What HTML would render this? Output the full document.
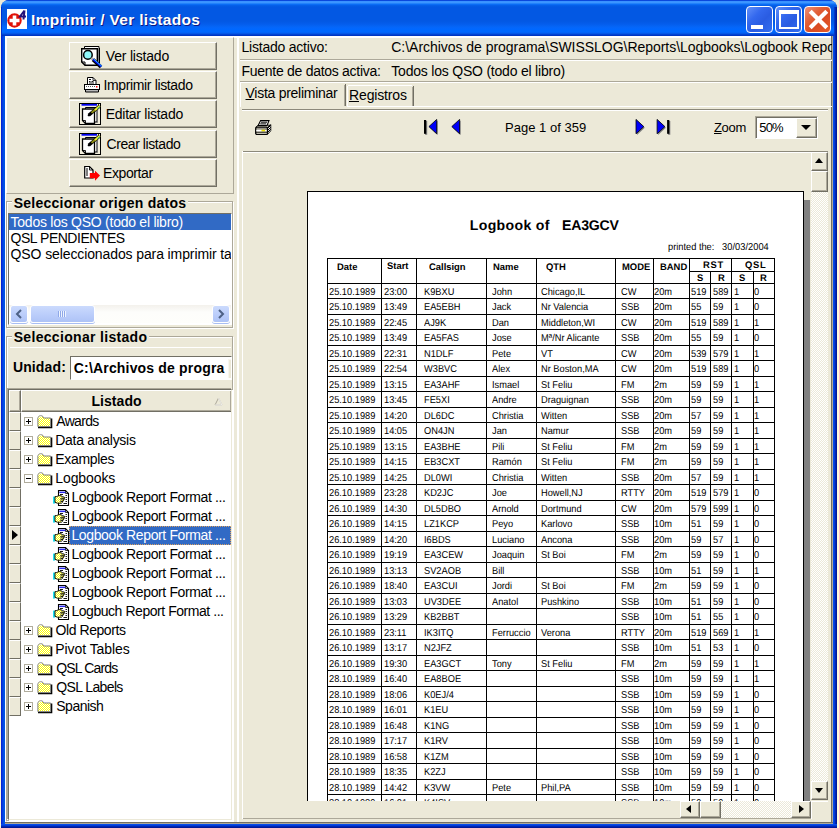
<!DOCTYPE html>
<html><head><meta charset="utf-8"><title>Imprimir / Ver listados</title>
<style>
*{box-sizing:border-box;margin:0;padding:0}
html,body{width:839px;height:828px;overflow:hidden;background:#ECE9D8}
body{font-family:"Liberation Sans",sans-serif;font-size:14px;color:#000;position:relative}
.lt{position:absolute;top:0;white-space:nowrap}
#b1{left:35.80px;letter-spacing:-0.199px}
#b2{left:33.50px;letter-spacing:-0.361px}
#b3{left:35.80px;letter-spacing:-0.273px}
#b4{left:36.50px;letter-spacing:-0.423px}
#b5{left:33.00px;letter-spacing:-0.393px}
#g1{left:6.70px;letter-spacing:0.256px}
#g2{left:6.70px;letter-spacing:0.319px}
#un{left:7.90px;letter-spacing:0.143px}
#hl{left:82.50px;letter-spacing:0.045px}
#r1{left:236.50px;letter-spacing:-0.222px}
#r2{left:236.50px;letter-spacing:-0.279px}
#r4{left:386.30px;letter-spacing:-0.210px}
#r3{left:386.30px;letter-spacing:-0.037px}
#t1{left:240.50px;letter-spacing:-0.271px}
#t2{left:344.00px;letter-spacing:-0.141px}
#zm{left:709.00px;letter-spacing:-0.334px}
#zp{left:3.30px;letter-spacing:-0.830px}
#pg{left:500.00px;letter-spacing:0.023px}
#l1{left:1.60px;letter-spacing:-0.253px}
#l2{left:1.60px;letter-spacing:-0.487px}
#l3{left:1.60px;letter-spacing:-0.110px}
#ed{left:2.80px;letter-spacing:0.173px}
#tr0{left:45.30px;letter-spacing:-0.686px}
#tr1{left:44.30px;letter-spacing:-0.287px}
#tr2{left:44.30px;letter-spacing:-0.338px}
#tr3{left:44.30px;letter-spacing:-0.102px}
#tr4{left:60.40px;letter-spacing:-0.368px}
#tr5{left:60.40px;letter-spacing:-0.368px}
#tr6{left:60.40px;letter-spacing:-0.368px}
#tr7{left:60.40px;letter-spacing:-0.368px}
#tr8{left:60.40px;letter-spacing:-0.368px}
#tr9{left:60.40px;letter-spacing:-0.368px}
#tr10{left:60.40px;letter-spacing:-0.451px}
#tr11{left:44.60px;letter-spacing:-0.440px}
#tr12{left:44.30px;letter-spacing:-0.062px}
#tr13{left:45.30px;letter-spacing:-0.856px}
#tr14{left:45.30px;letter-spacing:-0.618px}
#tr15{left:45.30px;letter-spacing:-0.518px}
i{display:block;position:absolute;font-style:normal}
.abs{position:absolute}
/* window frame */
#edgeL{left:0;top:0;width:1px;height:828px;background:#FFF9DC}
#edgeR{left:837px;top:0;width:2px;height:828px;background:#FFF9DC}
#win{position:absolute;left:1px;top:0;width:836px;height:828px;background:#0046E0;border-radius:8px 8px 0 0;overflow:hidden}
#title{position:absolute;left:0;top:0;width:836px;height:36px;
 background:linear-gradient(to bottom,#0A48DC 0,#0A48DC 1px,#3890FF 1px,#3C96FF 2.500px,#2383FA 3.500px,#0A6CF5 4.500px,#0560E8 5.500px,#0358E3 7px,#0358E3 21px,#045DEB 24px,#0566F8 27px,#0068FF 29px,#0068FF 32px,#0560F0 33px,#0450DE 34px,#0038C8 35px,#0034BE 36px)}
#bL{left:0;top:36px;width:4px;height:792px;background:linear-gradient(to right,#0019CF 0,#0831D9 1px,#0446E6 2px,#0055E5 3px,#0055E5 4px)}
#bR{left:832px;top:36px;width:4px;height:792px;background:linear-gradient(to right,#0A50EA 0,#0046E8 1px,#0030C8 2px,#001EA0 3px,#00138C 4px)}
#bB{left:0;top:824px;width:836px;height:4px;background:linear-gradient(to bottom,#0A50EA 0,#0046E8 1px,#0030C8 2px,#001EA0 3px,#00138C 4px)}
#ttext{position:absolute;left:30px;top:11px;font-weight:bold;font-size:15.5px;line-height:18px;color:#fff;white-space:nowrap;letter-spacing:.32px;text-shadow:1px 1px 0 #0A1883}
#client{position:absolute;left:4px;top:36px;width:828px;height:788px;background:#ECE9D8}
.raise{border:1px solid;border-color:#fff #ACA899 #ACA899 #fff}
.sunk{border:1px solid;border-color:#ACA899 #fff #fff #ACA899}
/* caption buttons */
.cb{position:absolute;top:6px;width:27px;height:27px;border:1px solid #fff;border-radius:4px;
 background:linear-gradient(135deg,#6290F8 0,#3368EE 35%,#2A5CE2 60%,#336EF0 100%)}
.cb.x{background:linear-gradient(135deg,#EC9078 0,#E26038 35%,#DA4A22 60%,#E45C2C 100%)}
/* left buttons */
.btn{position:absolute;left:65px;width:148px;height:28px;background:#ECE9D8;border:1px solid;border-color:#fff #716F64 #716F64 #fff;box-shadow:inset -1px -1px 0 #ACA899;white-space:nowrap}
.btn span{position:absolute;top:5px}
.btn svg{position:absolute}
.bold{font-weight:bold}
.lb{position:absolute;white-space:nowrap}
/* report */
#page i{background:#000}
.t{position:absolute;font-size:10px;line-height:12px;white-space:nowrap;color:#000;text-rendering:geometricPrecision;transform:scaleX(.926);transform-origin:0 50%}
span.t{font-weight:normal}
b.t{font-weight:bold}
.t.h{font-weight:bold;font-size:9.5px;transform:scaleX(.99)}
/* tree */
.ind{left:0;width:12px;height:19px;background:#ECE9D8;border:1px solid;border-color:#fff #716F64 #716F64 #fff}
.pm{width:9px;height:9px;border:1px solid #B0AC9C;background:#fff}
.pm .h{left:1px;top:3px;width:5px;height:1px;background:#000}
.pm .v{left:3px;top:1px;width:1px;height:5px;background:#000}
.fo{position:absolute;display:block}
.fo svg{display:block}
.tl{position:absolute;height:19px;line-height:18px;font-size:14px;white-space:nowrap;padding-left:2px}
.tl.sel{background:#316AC5;color:#fff;outline:1px dotted #d9a060;outline-offset:-1px;width:162px;overflow:hidden}
.xsb{box-shadow:0 1px 0 #A8BEF2}
.chk{background-color:#ECE9D8;background-image:linear-gradient(45deg,#fff 25%,transparent 25%,transparent 75%,#fff 75%),linear-gradient(45deg,#fff 25%,transparent 25%,transparent 75%,#fff 75%);background-size:2px 2px;background-position:0 0,1px 1px}
.cur{left:3px;width:0;height:0;border-left:6px solid #000;border-top:5px solid transparent;border-bottom:5px solid transparent}
</style></head>
<body>
<svg width="0" height="0" style="position:absolute"><defs><pattern id="dy" width="2" height="2" patternUnits="userSpaceOnUse"><rect width="2" height="2" fill="#FFFF00"/><rect width="1" height="1" fill="#fff"/><rect x="1" y="1" width="1" height="1" fill="#fff"/></pattern><pattern id="dw" width="2" height="2" patternUnits="userSpaceOnUse"><rect width="2" height="2" fill="#ECE9D8"/><rect width="1" height="1" fill="#fff"/><rect x="1" y="1" width="1" height="1" fill="#fff"/></pattern></defs></svg>
<i id="edgeL"></i><i id="edgeR"></i>
<i style="left:0;top:0;width:8px;height:8px;background:#ECE9D8"></i>
<i style="left:831px;top:0;width:8px;height:8px;background:#ECE9D8"></i>
<div id="win">
 <div id="title">
  <!-- app icon -->
  <svg class="abs" style="left:6px;top:9px" width="20" height="20" viewBox="0 0 20 20">
   <rect width="20" height="20" fill="#fff"/>
   <circle cx="7.5" cy="11.5" r="7.2" fill="#E01208"/>
   <path d="M5.7 6.5h3.6v3.2h3.2v3.6H9.3v3.2H5.7v-3.2H2.5V9.7h3.2z" fill="#fff"/>
   <path d="M17.5 1.5 L13 7.5 H19 M17.5 1.5 L16.5 10.5" stroke="#25107A" stroke-width="2" fill="none"/>
  </svg>
  <i style="left:833px;top:7px;width:3px;height:29px;background:linear-gradient(to right,#0040D8,#0028B0,#001590)"></i><i style="left:0;top:7px;width:1px;height:29px;background:#0030D0"></i>
  <div id="ttext">Imprimir / Ver listados</div>
  <div class="cb" style="left:745px"><i style="left:4px;top:18px;width:11.500px;height:4px;background:#fff"></i></div>
  <div class="cb" style="left:774px"><i style="left:3px;top:3px;width:19.500px;height:19px;border:2.200px solid #fff;border-top-width:4px"></i></div>
  <div class="cb x" style="left:803px"><svg style="position:absolute;left:.5px;top:0" width="25" height="25" viewBox="0 0 25 25"><path d="M4.200 4.200 L20.800 20.800 M20.800 4.200 L4.200 20.800" stroke="#fff" stroke-width="4.200"/></svg></div>
 </div>
 <i id="bL"></i><i id="bR"></i><i id="bB"></i>
 <div id="client">
  <!-- coordinates inside client = page coords minus (5,36) -->
  <i style="left:0;top:0;width:828px;height:2px;background:#fff"></i>
  <i style="left:0;top:0;width:1px;height:788px;background:#fff"></i>
  <i style="left:826px;top:0;width:1px;height:788px;background:#716F64"></i>
  <i style="left:827px;top:0;width:1px;height:788px;background:#ACA899"></i>
  <i style="left:0;top:786px;width:828px;height:1px;background:#716F64"></i>
  <i style="left:0;top:787px;width:828px;height:1px;background:#ACA899"></i>

  <!-- LEFT top button panel -->
  <div class="abs raise" style="left:1px;top:1px;width:228px;height:157px"></div>
  <div class="btn" style="left:64px;top:6px">
   <svg style="left:8px;top:2px" width="26" height="24" viewBox="0 0 26 24"><path d="M6.500 1.500H21V17.500H6.500Z" fill="#fff" stroke="#000"/><path d="M21.500 3V18.500H8" stroke="#000" fill="none"/><path d="M3.700 3.700H19.300V20.300H7L3.700 17Z" fill="#fff" stroke="#000" stroke-width="1.400"/><path d="M3.700 17H7V20.300" fill="none" stroke="#000"/><circle cx="9.900" cy="9.900" r="4.300" fill="#8FF6F8" stroke="#000" stroke-width="1.500"/><path d="M13.200 13 L15 14.600" stroke="#B0B0B0" stroke-width="2.600"/><path d="M15 14.600 L23 22" stroke="#000" stroke-width="3.600"/><path d="M15.200 14.200 L23.400 21.600" stroke="#0010FF" stroke-width="2"/><path d="M15.800 14 L23.800 21.200" stroke="#30D0FF" stroke-width=".9"/></svg>
   <span id="b1">Ver listado</span></div>
  <div class="btn" style="left:64px;top:35px">
   <svg style="left:13px;top:4px" width="18" height="18" viewBox="0 0 18 18"><path d="M4.500 8V1.500H10L13 4.500V8" fill="#fff" stroke="#000"/><path d="M10 1.500V4.500H13" fill="none" stroke="#000" stroke-width=".8"/><path d="M6 3.500h2M6 5.500h1.500M8.500 5.500h2M6 7h5" stroke="#000" stroke-width=".9"/><rect x="1.500" y="8.500" width="15" height="5" fill="#fff" stroke="#000"/><path d="M3 10.500h10" stroke="#555" stroke-dasharray="1 1"/><rect x="13" y="10" width="1.500" height="1.500" fill="#f00"/><path d="M2.500 13.500h13v2.500h-13z" fill="#B8B8B8" stroke="#000"/></svg>
   <span id="b2">Imprimir listado</span></div>
  <div class="btn" style="left:64px;top:64px">
   <svg style="left:9px;top:2px" width="24" height="24" viewBox="0 0 24 24"><rect x=".5" y=".5" width="21" height="21" fill="#F4F0DE" stroke="#000"/><rect x="2.500" y="1" width="15.500" height="1.700" fill="#0000F0"/><rect x="19" y="1.200" width="1" height="1" fill="#000"/><path d="M6.500 4.500H18V19H6.500Z" fill="#fff" stroke="#000"/><path d="M18.500 6V19.500H8" stroke="#777" fill="none"/><path d="M3.500 6H15.500V20.500H6.500L3.500 17.500Z" fill="#fff" stroke="#000" stroke-width="1.300"/><path d="M3.500 17.500H6.500V20.500" fill="none" stroke="#000" stroke-width=".9"/><path d="M9.700 12.200 L20.700 3" stroke="#000" stroke-width="3.400"/><path d="M12.500 9.800 L16.500 6.500" stroke="#8A8A10" stroke-width="2"/><path d="M16 7 L20.800 3" stroke="#F6F020" stroke-width="2.200"/><path d="M18.300 5.800 L21 3.600" stroke="#20B0A0" stroke-width="1"/><path d="M9 12.800 L11.500 10.700" stroke="#000" stroke-width="1.600"/></svg>
   <span id="b3">Editar listado</span></div>
  <div class="btn" style="left:64px;top:94px">
   <svg style="left:9px;top:2px" width="24" height="24" viewBox="0 0 24 24"><rect x=".5" y=".5" width="21" height="21" fill="#F4F0DE" stroke="#000"/><rect x="2.500" y="1" width="15.500" height="1.700" fill="#0000F0"/><rect x="19" y="1.200" width="1" height="1" fill="#000"/><path d="M6.500 4.500H18V19H6.500Z" fill="#fff" stroke="#000"/><path d="M18.500 6V19.500H8" stroke="#777" fill="none"/><path d="M3.500 6H15.500V20.500H6.500L3.500 17.500Z" fill="#fff" stroke="#000" stroke-width="1.300"/><path d="M3.500 17.500H6.500V20.500" fill="none" stroke="#000" stroke-width=".9"/><path d="M9.700 12.200 L20.700 3" stroke="#000" stroke-width="3.400"/><path d="M12.500 9.800 L16.500 6.500" stroke="#8A8A10" stroke-width="2"/><path d="M16 7 L20.800 3" stroke="#F6F020" stroke-width="2.200"/><path d="M18.300 5.800 L21 3.600" stroke="#20B0A0" stroke-width="1"/><path d="M9 12.800 L11.500 10.700" stroke="#000" stroke-width="1.600"/></svg>
   <span id="b4">Crear listado</span></div>
  <div class="btn" style="left:64px;top:123px">
   <svg style="left:14px;top:5px" width="18" height="18" viewBox="0 0 18 18"><path d="M.7 1.500H5.500L9 5V13H.7Z" fill="#fff" stroke="#000" stroke-width="1.200"/><path d="M5.500 1.500V5H9" fill="none" stroke="#000" stroke-width=".9"/><path d="M2 4h2M2 6h2M2 8h2M2 10h2" stroke="#000" stroke-width="1"/><path d="M5.800 8H11V5.700L16 10.500L11 15.700V13.200H5.800Z" fill="#FF0000"/></svg>
   <span id="b5">Exportar</span></div>

  <!-- Group 1 -->
  <div class="abs" style="left:1px;top:165px;width:227px;height:127px;border:1px solid #ACA899;box-shadow:inset 1px 1px 0 #fff, 1px 1px 0 #fff"></div>
  <div class="lb bold" id="g1" style="top:159px;background:#ECE9D8;padding:0 2px">Seleccionar origen datos</div>
  <div class="abs" style="left:3px;top:177px;width:224px;height:112px;background:#fff;border:1px solid;border-color:#716F64 #fff #fff #716F64;overflow:hidden">
   <div style="position:absolute;left:0;top:0;width:222px;height:16px;background:#316AC5;color:#fff;line-height:16px;white-space:nowrap"><span id="l1" class="lt">Todos los QSO (todo el libro)</span></div>
   <div style="position:absolute;left:0;top:16px;width:222px;height:16px;line-height:16px;white-space:nowrap"><span id="l2" class="lt">QSL PENDIENTES</span></div>
   <div style="position:absolute;left:0;top:32px;width:222px;height:16px;line-height:16px;white-space:nowrap;overflow:hidden"><span id="l3" class="lt">QSO seleccionados para imprimir tarjetas</span></div>
   <!-- XP horizontal scrollbar -->
   <div style="position:absolute;left:0;top:91px;width:222px;height:18px;background:linear-gradient(to bottom,#F3F1EC 0,#FDFDFB 40%,#FEFEFB 100%)">
    <i class="xsb" style="left:1px;top:0;width:18px;height:18px;border:1px solid #fff;border-radius:3px;background:linear-gradient(to bottom,#CBDAFD,#B9CCFA 60%,#AEC3F6)"></i>
    <i class="xsb" style="left:203px;top:0;width:18px;height:18px;border:1px solid #fff;border-radius:3px;background:linear-gradient(to bottom,#CBDAFD,#B9CCFA 60%,#AEC3F6)"></i>
    <i class="xsb" style="left:21px;top:0;width:65px;height:18px;border:1px solid #fff;border-radius:3px;background:linear-gradient(to bottom,#CBDAFD,#B9CCFA 60%,#AEC3F6)"></i>
    <svg class="abs" style="left:6px;top:4px" width="8" height="10" viewBox="0 0 8 10"><path d="M6 1 L2 5 L6 9" stroke="#4D6185" stroke-width="2" fill="none"/></svg>
    <svg class="abs" style="left:208px;top:4px" width="8" height="10" viewBox="0 0 8 10"><path d="M2 1 L6 5 L2 9" stroke="#4D6185" stroke-width="2" fill="none"/></svg>
    <i style="left:49px;top:6px;width:8px;height:6px;background:repeating-linear-gradient(to right,#8FA8E8 0,#8FA8E8 1px,#EEF4FE 1px,#EEF4FE 2px)"></i>
   </div>
  </div>

  <!-- Group 2 -->
  <div class="abs" style="left:1px;top:300px;width:227px;height:485px;border:1px solid #ACA899;box-shadow:inset 1px 1px 0 #fff, 1px 1px 0 #fff"></div>
  <div class="lb bold" id="g2" style="top:293px;background:#ECE9D8;padding:0 2px">Seleccionar listado</div>
  <div class="lb bold" id="un" style="top:323px">Unidad:</div>
  <div class="abs" style="left:65px;top:320px;width:162px;height:24px;background:#fff;border:1px solid;border-color:#716F64 #fff #fff #716F64;overflow:hidden;white-space:nowrap;font-weight:bold;line-height:22px"><span id="ed" class="lt" style="top:0">C:\Archivos de progra</span><i style="left:157px;top:2px;width:4px;height:19px;background:#ECE9D8;border-left:1px solid #F8F6EE;border-top:1px solid #F8F6EE"></i></div>

  <i style="left:5px;top:311px;width:221px;height:1px;background:#fff"></i>

  <!-- tree grid -->
  <div class="abs" style="left:3px;top:353px;width:224px;height:431px;background:#fff;border:1px solid;border-color:#716F64 #ECE9D8 #ECE9D8 #716F64;box-shadow:-1px -1px 0 #ACA899,1px 1px 0 #fff;overflow:hidden">
   <i style="left:0;top:0;width:12px;height:22px;background:#ECE9D8;border:1px solid;border-color:#fff #716F64 #716F64 #fff;box-shadow:inset -1px -1px 0 #ACA899"></i>
   <i style="left:12px;top:0;width:211px;height:22px;background:#ECE9D8;border:1px solid;border-color:#fff #716F64 #716F64 #fff;box-shadow:inset -1px -1px 0 #ACA899"></i>
   <div class="lb bold" id="hl" style="top:3px">Listado</div>
   <svg class="abs" style="left:205px;top:7px" width="9" height="9" viewBox="0 0 9 9"><path d="M4.5 1 L1 8 H8Z" fill="none" stroke="#ACA899"/><path d="M4.5 1 L8 8 H1" fill="none" stroke="#fff" stroke-width=".8"/></svg>
   <div style="position:absolute;left:0;top:-1px;width:225px;height:421px" id="tree">
<i class="ind" style="top:23px"></i>
<i class="pm" style="left:15px;top:28px"><i class="h"></i><i class="v"></i></i>
<span class="fo" style="left:27px;top:25px"><svg class="fi" width="17" height="15" viewBox="0 0 17 15"><path d="M2 13.500 H15.500 V4.500" fill="none" stroke="#000" stroke-width="1.600"/><path d="M1.900 12.600 V3.800 L3.300 1.900 H6.300 L7.700 4 H14.600 V12.600 Z" fill="url(#dy)" stroke="#808080" stroke-width="1"/><path d="M2.600 4.400 L3.600 2.700 H6" stroke="#fff" stroke-width=".8" fill="none"/></svg></span>
<span class="tl" id="tr0" style="top:23.3px">Awards</span>
<i class="ind" style="top:42px"></i>
<i class="pm" style="left:15px;top:47px"><i class="h"></i><i class="v"></i></i>
<span class="fo" style="left:27px;top:44px"><svg class="fi" width="17" height="15" viewBox="0 0 17 15"><path d="M2 13.500 H15.500 V4.500" fill="none" stroke="#000" stroke-width="1.600"/><path d="M1.900 12.600 V3.800 L3.300 1.900 H6.300 L7.700 4 H14.600 V12.600 Z" fill="url(#dy)" stroke="#808080" stroke-width="1"/><path d="M2.600 4.400 L3.600 2.700 H6" stroke="#fff" stroke-width=".8" fill="none"/></svg></span>
<span class="tl" id="tr1" style="top:42.3px">Data analysis</span>
<i class="ind" style="top:61px"></i>
<i class="pm" style="left:15px;top:66px"><i class="h"></i><i class="v"></i></i>
<span class="fo" style="left:27px;top:63px"><svg class="fi" width="17" height="15" viewBox="0 0 17 15"><path d="M2 13.500 H15.500 V4.500" fill="none" stroke="#000" stroke-width="1.600"/><path d="M1.900 12.600 V3.800 L3.300 1.900 H6.300 L7.700 4 H14.600 V12.600 Z" fill="url(#dy)" stroke="#808080" stroke-width="1"/><path d="M2.600 4.400 L3.600 2.700 H6" stroke="#fff" stroke-width=".8" fill="none"/></svg></span>
<span class="tl" id="tr2" style="top:61.3px">Examples</span>
<i class="ind" style="top:80px"></i>
<i class="pm" style="left:15px;top:85px"><i class="h"></i></i>
<span class="fo" style="left:27px;top:82px"><svg class="fi" width="17" height="15" viewBox="0 0 17 15"><path d="M2 13.500 H15.500 V4.500" fill="none" stroke="#000" stroke-width="1.600"/><path d="M1.900 12.600 V3.800 L3.300 1.900 H6.300 L7.700 4 H14.600 V12.600 Z" fill="url(#dy)" stroke="#808080" stroke-width="1"/><path d="M2.600 4.400 L3.600 2.700 H6" stroke="#fff" stroke-width=".8" fill="none"/></svg></span>
<span class="tl" id="tr3" style="top:80.3px">Logbooks</span>
<i class="ind" style="top:99px"></i>
<span class="fo" style="left:43px;top:100px"><svg class="ri" width="18" height="18" viewBox="0 0 18 18"><path d="M6.500 1.500 H13.500 L16.500 4.500 V16.500 H6.500Z" fill="#fff" stroke="#000" stroke-width="1.100"/><path d="M13.500 1.500 V4.500 H16.500" fill="none" stroke="#000" stroke-width=".8"/><rect x="7.300" y="2.600" width="6" height="1.500" fill="#2828F0"/><path d="M8 5.500H11" stroke="#000" stroke-width=".9"/><path d="M13.500 6.500h1.500M13.500 8.500h1.500M13.500 10.500h1.500M13.500 12.500h1.500M11.500 14.500h3.500" stroke="#000" stroke-width=".9"/><rect x="1" y="7.600" width="2" height="7" fill="#20E0F0"/><path d="M3 7.600 H4.800 L6.500 6.700 H9 Q10 6.700 10 7.900 H12 Q12.800 8 12.600 9.300 H12 Q12.600 10 12 10.900 H11.300 Q11.800 11.700 11 12.500 H10.300 Q10.600 13.500 9.700 14.200 H5.500 L3 13.400Z" fill="url(#dy)" stroke="#000" stroke-width=".9"/><path d="M8.300 9.400H12M8.300 10.900H11.500M8.300 12.500H10.800" stroke="#000" stroke-width=".8"/></svg></span>
<span class="tl" id="tr4" style="top:99px;padding-top:.3px">Logbook Report Format ...</span>
<i class="ind" style="top:118px"></i>
<span class="fo" style="left:43px;top:119px"><svg class="ri" width="18" height="18" viewBox="0 0 18 18"><path d="M6.500 1.500 H13.500 L16.500 4.500 V16.500 H6.500Z" fill="#fff" stroke="#000" stroke-width="1.100"/><path d="M13.500 1.500 V4.500 H16.500" fill="none" stroke="#000" stroke-width=".8"/><rect x="7.300" y="2.600" width="6" height="1.500" fill="#2828F0"/><path d="M8 5.500H11" stroke="#000" stroke-width=".9"/><path d="M13.500 6.500h1.500M13.500 8.500h1.500M13.500 10.500h1.500M13.500 12.500h1.500M11.500 14.500h3.500" stroke="#000" stroke-width=".9"/><rect x="1" y="7.600" width="2" height="7" fill="#20E0F0"/><path d="M3 7.600 H4.800 L6.500 6.700 H9 Q10 6.700 10 7.900 H12 Q12.800 8 12.600 9.300 H12 Q12.600 10 12 10.900 H11.300 Q11.800 11.700 11 12.500 H10.300 Q10.600 13.500 9.700 14.200 H5.500 L3 13.400Z" fill="url(#dy)" stroke="#000" stroke-width=".9"/><path d="M8.300 9.400H12M8.300 10.900H11.500M8.300 12.500H10.800" stroke="#000" stroke-width=".8"/></svg></span>
<span class="tl" id="tr5" style="top:118px;padding-top:.3px">Logbook Report Format ...</span>
<i class="ind" style="top:137px"></i>
<span class="fo" style="left:43px;top:138px"><svg class="ri" width="18" height="18" viewBox="0 0 18 18"><path d="M6.500 1.500 H13.500 L16.500 4.500 V16.500 H6.500Z" fill="#fff" stroke="#000" stroke-width="1.100"/><path d="M13.500 1.500 V4.500 H16.500" fill="none" stroke="#000" stroke-width=".8"/><rect x="7.300" y="2.600" width="6" height="1.500" fill="#2828F0"/><path d="M8 5.500H11" stroke="#000" stroke-width=".9"/><path d="M13.500 6.500h1.500M13.500 8.500h1.500M13.500 10.500h1.500M13.500 12.500h1.500M11.500 14.500h3.500" stroke="#000" stroke-width=".9"/><rect x="1" y="7.600" width="2" height="7" fill="#20E0F0"/><path d="M3 7.600 H4.800 L6.500 6.700 H9 Q10 6.700 10 7.900 H12 Q12.800 8 12.600 9.300 H12 Q12.600 10 12 10.900 H11.300 Q11.800 11.700 11 12.500 H10.300 Q10.600 13.500 9.700 14.200 H5.500 L3 13.400Z" fill="url(#dy)" stroke="#000" stroke-width=".9"/><path d="M8.300 9.400H12M8.300 10.900H11.500M8.300 12.500H10.800" stroke="#000" stroke-width=".8"/></svg></span>
<span class="tl sel" id="tr6" style="top:137px;padding-top:.3px">Logbook Report Format ...</span>
<i class="cur" style="top:141px"></i>
<i class="ind" style="top:156px"></i>
<span class="fo" style="left:43px;top:157px"><svg class="ri" width="18" height="18" viewBox="0 0 18 18"><path d="M6.500 1.500 H13.500 L16.500 4.500 V16.500 H6.500Z" fill="#fff" stroke="#000" stroke-width="1.100"/><path d="M13.500 1.500 V4.500 H16.500" fill="none" stroke="#000" stroke-width=".8"/><rect x="7.300" y="2.600" width="6" height="1.500" fill="#2828F0"/><path d="M8 5.500H11" stroke="#000" stroke-width=".9"/><path d="M13.500 6.500h1.500M13.500 8.500h1.500M13.500 10.500h1.500M13.500 12.500h1.500M11.500 14.500h3.500" stroke="#000" stroke-width=".9"/><rect x="1" y="7.600" width="2" height="7" fill="#20E0F0"/><path d="M3 7.600 H4.800 L6.500 6.700 H9 Q10 6.700 10 7.900 H12 Q12.800 8 12.600 9.300 H12 Q12.600 10 12 10.900 H11.300 Q11.800 11.700 11 12.500 H10.300 Q10.600 13.500 9.700 14.200 H5.500 L3 13.400Z" fill="url(#dy)" stroke="#000" stroke-width=".9"/><path d="M8.300 9.400H12M8.300 10.900H11.500M8.300 12.500H10.800" stroke="#000" stroke-width=".8"/></svg></span>
<span class="tl" id="tr7" style="top:156px;padding-top:.3px">Logbook Report Format ...</span>
<i class="ind" style="top:175px"></i>
<span class="fo" style="left:43px;top:176px"><svg class="ri" width="18" height="18" viewBox="0 0 18 18"><path d="M6.500 1.500 H13.500 L16.500 4.500 V16.500 H6.500Z" fill="#fff" stroke="#000" stroke-width="1.100"/><path d="M13.500 1.500 V4.500 H16.500" fill="none" stroke="#000" stroke-width=".8"/><rect x="7.300" y="2.600" width="6" height="1.500" fill="#2828F0"/><path d="M8 5.500H11" stroke="#000" stroke-width=".9"/><path d="M13.500 6.500h1.500M13.500 8.500h1.500M13.500 10.500h1.500M13.500 12.500h1.500M11.500 14.500h3.500" stroke="#000" stroke-width=".9"/><rect x="1" y="7.600" width="2" height="7" fill="#20E0F0"/><path d="M3 7.600 H4.800 L6.500 6.700 H9 Q10 6.700 10 7.900 H12 Q12.800 8 12.600 9.300 H12 Q12.600 10 12 10.900 H11.300 Q11.800 11.700 11 12.500 H10.300 Q10.600 13.500 9.700 14.200 H5.500 L3 13.400Z" fill="url(#dy)" stroke="#000" stroke-width=".9"/><path d="M8.300 9.400H12M8.300 10.900H11.500M8.300 12.500H10.800" stroke="#000" stroke-width=".8"/></svg></span>
<span class="tl" id="tr8" style="top:175px;padding-top:.3px">Logbook Report Format ...</span>
<i class="ind" style="top:194px"></i>
<span class="fo" style="left:43px;top:195px"><svg class="ri" width="18" height="18" viewBox="0 0 18 18"><path d="M6.500 1.500 H13.500 L16.500 4.500 V16.500 H6.500Z" fill="#fff" stroke="#000" stroke-width="1.100"/><path d="M13.500 1.500 V4.500 H16.500" fill="none" stroke="#000" stroke-width=".8"/><rect x="7.300" y="2.600" width="6" height="1.500" fill="#2828F0"/><path d="M8 5.500H11" stroke="#000" stroke-width=".9"/><path d="M13.500 6.500h1.500M13.500 8.500h1.500M13.500 10.500h1.500M13.500 12.500h1.500M11.500 14.500h3.500" stroke="#000" stroke-width=".9"/><rect x="1" y="7.600" width="2" height="7" fill="#20E0F0"/><path d="M3 7.600 H4.800 L6.500 6.700 H9 Q10 6.700 10 7.900 H12 Q12.800 8 12.600 9.300 H12 Q12.600 10 12 10.900 H11.300 Q11.800 11.700 11 12.500 H10.300 Q10.600 13.500 9.700 14.200 H5.500 L3 13.400Z" fill="url(#dy)" stroke="#000" stroke-width=".9"/><path d="M8.300 9.400H12M8.300 10.900H11.500M8.300 12.500H10.800" stroke="#000" stroke-width=".8"/></svg></span>
<span class="tl" id="tr9" style="top:194px;padding-top:.3px">Logbook Report Format ...</span>
<i class="ind" style="top:213px"></i>
<span class="fo" style="left:43px;top:214px"><svg class="ri" width="18" height="18" viewBox="0 0 18 18"><path d="M6.500 1.500 H13.500 L16.500 4.500 V16.500 H6.500Z" fill="#fff" stroke="#000" stroke-width="1.100"/><path d="M13.500 1.500 V4.500 H16.500" fill="none" stroke="#000" stroke-width=".8"/><rect x="7.300" y="2.600" width="6" height="1.500" fill="#2828F0"/><path d="M8 5.500H11" stroke="#000" stroke-width=".9"/><path d="M13.500 6.500h1.500M13.500 8.500h1.500M13.500 10.500h1.500M13.500 12.500h1.500M11.500 14.500h3.500" stroke="#000" stroke-width=".9"/><rect x="1" y="7.600" width="2" height="7" fill="#20E0F0"/><path d="M3 7.600 H4.800 L6.500 6.700 H9 Q10 6.700 10 7.900 H12 Q12.800 8 12.600 9.300 H12 Q12.600 10 12 10.900 H11.300 Q11.800 11.700 11 12.500 H10.300 Q10.600 13.500 9.700 14.200 H5.500 L3 13.400Z" fill="url(#dy)" stroke="#000" stroke-width=".9"/><path d="M8.300 9.400H12M8.300 10.900H11.500M8.300 12.500H10.800" stroke="#000" stroke-width=".8"/></svg></span>
<span class="tl" id="tr10" style="top:213px;padding-top:.3px">Logbuch Report Format ...</span>
<i class="ind" style="top:232px"></i>
<i class="pm" style="left:15px;top:237px"><i class="h"></i><i class="v"></i></i>
<span class="fo" style="left:27px;top:234px"><svg class="fi" width="17" height="15" viewBox="0 0 17 15"><path d="M2 13.500 H15.500 V4.500" fill="none" stroke="#000" stroke-width="1.600"/><path d="M1.900 12.600 V3.800 L3.300 1.900 H6.300 L7.700 4 H14.600 V12.600 Z" fill="url(#dy)" stroke="#808080" stroke-width="1"/><path d="M2.600 4.400 L3.600 2.700 H6" stroke="#fff" stroke-width=".8" fill="none"/></svg></span>
<span class="tl" id="tr11" style="top:232.3px">Old Reports</span>
<i class="ind" style="top:251px"></i>
<i class="pm" style="left:15px;top:256px"><i class="h"></i><i class="v"></i></i>
<span class="fo" style="left:27px;top:253px"><svg class="fi" width="17" height="15" viewBox="0 0 17 15"><path d="M2 13.500 H15.500 V4.500" fill="none" stroke="#000" stroke-width="1.600"/><path d="M1.900 12.600 V3.800 L3.300 1.900 H6.300 L7.700 4 H14.600 V12.600 Z" fill="url(#dy)" stroke="#808080" stroke-width="1"/><path d="M2.600 4.400 L3.600 2.700 H6" stroke="#fff" stroke-width=".8" fill="none"/></svg></span>
<span class="tl" id="tr12" style="top:251.3px">Pivot Tables</span>
<i class="ind" style="top:270px"></i>
<i class="pm" style="left:15px;top:275px"><i class="h"></i><i class="v"></i></i>
<span class="fo" style="left:27px;top:272px"><svg class="fi" width="17" height="15" viewBox="0 0 17 15"><path d="M2 13.500 H15.500 V4.500" fill="none" stroke="#000" stroke-width="1.600"/><path d="M1.900 12.600 V3.800 L3.300 1.900 H6.300 L7.700 4 H14.600 V12.600 Z" fill="url(#dy)" stroke="#808080" stroke-width="1"/><path d="M2.600 4.400 L3.600 2.700 H6" stroke="#fff" stroke-width=".8" fill="none"/></svg></span>
<span class="tl" id="tr13" style="top:270.3px">QSL Cards</span>
<i class="ind" style="top:289px"></i>
<i class="pm" style="left:15px;top:294px"><i class="h"></i><i class="v"></i></i>
<span class="fo" style="left:27px;top:291px"><svg class="fi" width="17" height="15" viewBox="0 0 17 15"><path d="M2 13.500 H15.500 V4.500" fill="none" stroke="#000" stroke-width="1.600"/><path d="M1.900 12.600 V3.800 L3.300 1.900 H6.300 L7.700 4 H14.600 V12.600 Z" fill="url(#dy)" stroke="#808080" stroke-width="1"/><path d="M2.600 4.400 L3.600 2.700 H6" stroke="#fff" stroke-width=".8" fill="none"/></svg></span>
<span class="tl" id="tr14" style="top:289.3px">QSL Labels</span>
<i class="ind" style="top:308px"></i>
<i class="pm" style="left:15px;top:313px"><i class="h"></i><i class="v"></i></i>
<span class="fo" style="left:27px;top:310px"><svg class="fi" width="17" height="15" viewBox="0 0 17 15"><path d="M2 13.500 H15.500 V4.500" fill="none" stroke="#000" stroke-width="1.600"/><path d="M1.900 12.600 V3.800 L3.300 1.900 H6.300 L7.700 4 H14.600 V12.600 Z" fill="url(#dy)" stroke="#808080" stroke-width="1"/><path d="M2.600 4.400 L3.600 2.700 H6" stroke="#fff" stroke-width=".8" fill="none"/></svg></span>
<span class="tl" id="tr15" style="top:308.3px">Spanish</span>
   </div>
  </div>

  <!-- splitter -->
  
  <i style="left:232px;top:0;width:2px;height:786px;background:#fff"></i>

  <!-- RIGHT info rows -->
  <i style="left:235px;top:23px;width:592px;height:1px;background:#ACA899"></i>
  <i style="left:235px;top:24px;width:592px;height:1px;background:#fff"></i>
  <i style="left:235px;top:45px;width:592px;height:1px;background:#ACA899"></i>
  <i style="left:235px;top:46px;width:592px;height:1px;background:#fff"></i>
  <div class="lb" id="r1" style="top:2.500px">Listado activo:</div>
  <div class="lb" id="r3" style="top:2.500px;width:441px;overflow:hidden">C:\Archivos de programa\SWISSLOG\Reports\Logbooks\Logbook Report</div>
  <div class="lb" id="r2" style="top:26.500px">Fuente de datos activa:</div>
  <div class="lb" id="r4" style="top:26.500px">Todos los QSO (todo el libro)</div>

  <!-- tabs -->
  <i style="left:235px;top:47px;width:1px;height:24px;background:#fff"></i>
  <i style="left:340px;top:48px;width:1px;height:22px;background:#716F64"></i>
  <i style="left:339px;top:49px;width:1px;height:21px;background:#ACA899"></i>
  <i style="left:342px;top:50px;width:1px;height:20px;background:#fff"></i>
  <i style="left:343px;top:49px;width:64px;height:1px;background:#fff"></i>
  <i style="left:408px;top:50px;width:1px;height:20px;background:#716F64"></i>
  <i style="left:407px;top:51px;width:1px;height:19px;background:#ACA899"></i>
  <i style="left:342px;top:70px;width:485px;height:1px;background:#fff"></i>
  <div class="lb" id="t1" style="top:49px"><u>V</u>ista preliminar</div>
  <div class="lb" id="t2" style="top:51px"><u>R</u>egistros</div>

  <!-- toolbar -->
  <i style="left:237px;top:73px;width:586px;height:1px;background:#8C897B"></i>
  <i style="left:237px;top:74px;width:586px;height:1px;background:#fff"></i>
  <svg class="abs" style="left:250px;top:84px" width="17" height="16" viewBox="0 0 17 16"><defs><pattern id="dk" width="2" height="2" patternUnits="userSpaceOnUse"><rect width="2" height="2" fill="#fff"/><rect width="1" height="1" fill="#000"/><rect x="1" y="1" width="1" height="1" fill="#000"/></pattern></defs><path d="M12.500 7.500 L15.800 4.500 V10.800 L12.500 14.300 Z" fill="url(#dk)" stroke="#000" stroke-width=".8"/><path d="M.8 7.300 L3.200 5.200 H14.800 L12.500 7.300 Z" fill="#FFFBE6" stroke="#000" stroke-width=".9"/><path d="M5.600 .6 H14 L12 5.500 H3.200 Z" fill="#fff" stroke="#000" stroke-width="1.100"/><path d="M6 2.200 H12 M5.200 3.900 H11.200" stroke="#000" stroke-width="1"/><rect x=".7" y="7.200" width="11.800" height="7.200" rx="1.200" fill="#FFFBE6" stroke="#000" stroke-width="1.300"/><path d="M1 9 H12" stroke="#000" stroke-width=".8"/><rect x="1.500" y="9.700" width="5" height="1.700" fill="#fff"/><rect x="6.500" y="9.700" width="3.500" height="1.700" fill="#F0E400"/><path d="M1 12.200 H12" stroke="#000" stroke-width="1"/></svg>
  <!-- nav arrows -->
  <svg class="abs" style="left:418px;top:83px" width="18" height="17" viewBox="0 0 18 17"><rect x="2" y="2" width="2.200" height="13.800" fill="#808080"/><rect x="1" y="1" width="2.200" height="13.800" fill="#000"/><path d="M6.9 8.700 L14.7 1.400 V15.900Z" fill="#808080"/><path d="M5.9 7.600 L13.7 .4 V14.800Z" fill="#0000F8" stroke="#000" stroke-width=".8" stroke-linejoin="miter"/></svg>
  <svg class="abs" style="left:446px;top:83px" width="12" height="17" viewBox="0 0 12 17"><path d="M1.8 8.700 L9.6 1.400 V15.900Z" fill="#808080"/><path d="M0.8 7.600 L8.6 .4 V14.800Z" fill="#0000F8" stroke="#000" stroke-width=".8" stroke-linejoin="miter"/></svg>
  <div class="lb" id="pg" style="top:84px;font-size:13px">Page 1 of 359</div>
  <svg class="abs" style="left:630px;top:83px" width="12" height="17" viewBox="0 0 12 17"><path d="M2.0 1.400 L9.8 8.700 L2.0 15.900Z" fill="#808080"/><path d="M1.0 .4 L8.8 7.600 L1.0 14.800Z" fill="#0000F8" stroke="#000" stroke-width=".8"/></svg>
  <svg class="abs" style="left:650px;top:83px" width="18" height="17" viewBox="0 0 18 17"><rect x="13.100" y="2" width="2.200" height="13.800" fill="#808080"/><path d="M3.1 1.400 L10.9 8.700 L3.1 15.900Z" fill="#808080"/><path d="M2.1 .4 L9.9 7.600 L2.1 14.800Z" fill="#0000F8" stroke="#000" stroke-width=".8"/><rect x="12.100" y="1" width="2.200" height="13.800" fill="#000"/></svg>
  <div class="lb" id="zm" style="top:83.500px;font-size:13px"><u>Z</u>oom</div>
  <div class="abs" style="left:750px;top:79.500px;width:63px;height:23px;background:#fff;border:1px solid;border-color:#ACA899 #fff #fff #ACA899;box-shadow:inset 1px 1px 0 #716F64">
   <div class="lb" id="zp" style="top:3.500px;font-size:13px">50%</div>
   <i style="left:40px;top:1px;width:21px;height:20px;background:#ECE9D8;border:1px solid;border-color:#fff #716F64 #716F64 #fff;box-shadow:inset -1px -1px 0 #ACA899"></i>
   <i style="left:44.500px;top:8.500px;width:0;height:0;border-top:5px solid #000;border-left:5px solid transparent;border-right:5px solid transparent"></i>
  </div>
  <i style="left:237px;top:115px;width:586px;height:1px;background:#8C897B"></i>
  <i style="left:237px;top:116px;width:569px;height:1px;background:#fff"></i>
  <i style="left:237px;top:115px;width:1px;height:668px;background:#fff"></i>

  <!-- preview viewport : page coords (243,152) .. (810,801) -->
  <div class="abs" style="left:238px;top:117px;width:568px;height:648px;overflow:hidden;background:#ECE9D8">
   <i style="left:71px;top:47px;width:496px;height:620px;background:#808080"></i>
   <div id="page" style="position:absolute;left:64px;top:38px;width:497px;height:620px;background:#fff;border:1px solid #000;border-width:1.2px">
    <div style="position:absolute;left:-1.2px;top:-1.2px;width:497px;height:620px">
     <b class="t" style="left:163px;top:26.500px;font-size:14.1px;line-height:16px;transform:none"><span style="letter-spacing:.32px">Logbook of</span><span style="position:absolute;left:92.300px;letter-spacing:-.25px">EA3GCV</span></b>
     <span class="t" style="left:361.500px;top:51px">printed the:</span><span class="t" style="left:415.500px;top:51px;letter-spacing:.05px">30/03/2004</span>
<i style="left:19.95px;top:67.70px;width:1.10px;height:561.30px;background:#000"></i>
<i style="left:73.95px;top:67.70px;width:1.10px;height:561.30px;background:#000"></i>
<i style="left:108.85px;top:67.70px;width:1.10px;height:561.30px;background:#000"></i>
<i style="left:179.25px;top:67.70px;width:1.10px;height:561.30px;background:#000"></i>
<i style="left:228.95px;top:67.70px;width:1.10px;height:561.30px;background:#000"></i>
<i style="left:308.25px;top:67.70px;width:1.10px;height:561.30px;background:#000"></i>
<i style="left:346.05px;top:67.70px;width:1.10px;height:561.30px;background:#000"></i>
<i style="left:381.95px;top:67.70px;width:1.10px;height:561.30px;background:#000"></i>
<i style="left:403.45px;top:80.60px;width:1.10px;height:548.40px;background:#000"></i>
<i style="left:424.45px;top:67.70px;width:1.10px;height:561.30px;background:#000"></i>
<i style="left:446.25px;top:80.60px;width:1.10px;height:548.40px;background:#000"></i>
<i style="left:466.75px;top:67.70px;width:1.10px;height:561.30px;background:#000"></i>
<i style="left:19.95px;top:67.15px;width:447.90px;height:1.10px;background:#000"></i>
<i style="left:382.50px;top:80.10px;width:84.80px;height:1.00px;background:#000"></i>
<i style="left:20.50px;top:91.70px;width:446.80px;height:1.00px;background:#000"></i>
<i style="left:20.50px;top:107.20px;width:446.80px;height:1.00px;background:#000"></i>
<i style="left:20.50px;top:122.70px;width:446.80px;height:1.00px;background:#000"></i>
<i style="left:20.50px;top:138.20px;width:446.80px;height:1.00px;background:#000"></i>
<i style="left:20.50px;top:153.70px;width:446.80px;height:1.00px;background:#000"></i>
<i style="left:20.50px;top:169.20px;width:446.80px;height:1.00px;background:#000"></i>
<i style="left:20.50px;top:184.70px;width:446.80px;height:1.00px;background:#000"></i>
<i style="left:20.50px;top:200.20px;width:446.80px;height:1.00px;background:#000"></i>
<i style="left:20.50px;top:215.70px;width:446.80px;height:1.00px;background:#000"></i>
<i style="left:20.50px;top:231.20px;width:446.80px;height:1.00px;background:#000"></i>
<i style="left:20.50px;top:246.70px;width:446.80px;height:1.00px;background:#000"></i>
<i style="left:20.50px;top:262.20px;width:446.80px;height:1.00px;background:#000"></i>
<i style="left:20.50px;top:277.70px;width:446.80px;height:1.00px;background:#000"></i>
<i style="left:20.50px;top:293.20px;width:446.80px;height:1.00px;background:#000"></i>
<i style="left:20.50px;top:308.70px;width:446.80px;height:1.00px;background:#000"></i>
<i style="left:20.50px;top:324.20px;width:446.80px;height:1.00px;background:#000"></i>
<i style="left:20.50px;top:339.70px;width:446.80px;height:1.00px;background:#000"></i>
<i style="left:20.50px;top:355.20px;width:446.80px;height:1.00px;background:#000"></i>
<i style="left:20.50px;top:370.70px;width:446.80px;height:1.00px;background:#000"></i>
<i style="left:20.50px;top:386.20px;width:446.80px;height:1.00px;background:#000"></i>
<i style="left:20.50px;top:401.70px;width:446.80px;height:1.00px;background:#000"></i>
<i style="left:20.50px;top:417.20px;width:446.80px;height:1.00px;background:#000"></i>
<i style="left:20.50px;top:432.70px;width:446.80px;height:1.00px;background:#000"></i>
<i style="left:20.50px;top:448.20px;width:446.80px;height:1.00px;background:#000"></i>
<i style="left:20.50px;top:463.70px;width:446.80px;height:1.00px;background:#000"></i>
<i style="left:20.50px;top:479.20px;width:446.80px;height:1.00px;background:#000"></i>
<i style="left:20.50px;top:494.70px;width:446.80px;height:1.00px;background:#000"></i>
<i style="left:20.50px;top:510.20px;width:446.80px;height:1.00px;background:#000"></i>
<i style="left:20.50px;top:525.70px;width:446.80px;height:1.00px;background:#000"></i>
<i style="left:20.50px;top:541.20px;width:446.80px;height:1.00px;background:#000"></i>
<i style="left:20.50px;top:556.70px;width:446.80px;height:1.00px;background:#000"></i>
<i style="left:20.50px;top:572.20px;width:446.80px;height:1.00px;background:#000"></i>
<i style="left:20.50px;top:587.70px;width:446.80px;height:1.00px;background:#000"></i>
<i style="left:20.50px;top:603.20px;width:446.80px;height:1.00px;background:#000"></i>
<i style="left:20.50px;top:618.70px;width:446.80px;height:1.00px;background:#000"></i>
<b class="t h" style="left:30.00px;top:70.80px">Date</b>
<b class="t h" style="left:80.00px;top:69.80px">Start</b>
<b class="t h" style="left:122.00px;top:70.80px">Callsign</b>
<b class="t h" style="left:186.00px;top:70.80px">Name</b>
<b class="t h" style="left:239.00px;top:70.80px">QTH</b>
<b class="t h" style="left:315.50px;top:70.80px">MODE</b>
<b class="t h" style="left:353.00px;top:70.80px">BAND</b>
<b class="t h" style="left:396.50px;top:69.00px"><span style="letter-spacing:.7px">RST</span></b>
<b class="t h" style="left:438.00px;top:69.00px"><span style="letter-spacing:.7px">QSL</span></b>
<b class="t h" style="left:390.50px;top:81.80px">S</b>
<b class="t h" style="left:411.50px;top:81.80px">R</b>
<b class="t h" style="left:432.50px;top:81.80px">S</b>
<b class="t h" style="left:453.50px;top:81.80px">R</b>
<span class="t" style="left:22.00px;top:95.75px">25.10.1989</span>
<span class="t" style="left:77.00px;top:95.75px">23:00</span>
<span class="t" style="left:116.90px;top:95.75px">K9BXU</span>
<span class="t" style="left:185.30px;top:95.75px">John</span>
<span class="t" style="left:233.80px;top:95.75px">Chicago,IL</span>
<span class="t" style="left:314.50px;top:95.75px">CW</span>
<span class="t" style="left:347.10px;top:95.75px">20m</span>
<span class="t" style="left:384.50px;top:95.75px">519</span>
<span class="t" style="left:406.50px;top:95.75px">589</span>
<span class="t" style="left:427.50px;top:95.75px">1</span>
<span class="t" style="left:447.20px;top:95.75px">0</span>
<span class="t" style="left:22.00px;top:111.25px">25.10.1989</span>
<span class="t" style="left:77.00px;top:111.25px">13:49</span>
<span class="t" style="left:116.90px;top:111.25px">EA5EBH</span>
<span class="t" style="left:185.30px;top:111.25px">Jack</span>
<span class="t" style="left:233.80px;top:111.25px">Nr Valencia</span>
<span class="t" style="left:314.50px;top:111.25px">SSB</span>
<span class="t" style="left:347.10px;top:111.25px">20m</span>
<span class="t" style="left:384.50px;top:111.25px">55</span>
<span class="t" style="left:406.50px;top:111.25px">59</span>
<span class="t" style="left:427.50px;top:111.25px">1</span>
<span class="t" style="left:447.20px;top:111.25px">0</span>
<span class="t" style="left:22.00px;top:126.75px">25.10.1989</span>
<span class="t" style="left:77.00px;top:126.75px">22:45</span>
<span class="t" style="left:116.90px;top:126.75px">AJ9K</span>
<span class="t" style="left:185.30px;top:126.75px">Dan</span>
<span class="t" style="left:233.80px;top:126.75px">Middleton,WI</span>
<span class="t" style="left:314.50px;top:126.75px">CW</span>
<span class="t" style="left:347.10px;top:126.75px">20m</span>
<span class="t" style="left:384.50px;top:126.75px">519</span>
<span class="t" style="left:406.50px;top:126.75px">589</span>
<span class="t" style="left:427.50px;top:126.75px">1</span>
<span class="t" style="left:447.20px;top:126.75px">1</span>
<span class="t" style="left:22.00px;top:142.25px">25.10.1989</span>
<span class="t" style="left:77.00px;top:142.25px">13:49</span>
<span class="t" style="left:116.90px;top:142.25px">EA5FAS</span>
<span class="t" style="left:185.30px;top:142.25px">Jose</span>
<span class="t" style="left:233.80px;top:142.25px">Mª/Nr Alicante</span>
<span class="t" style="left:314.50px;top:142.25px">SSB</span>
<span class="t" style="left:347.10px;top:142.25px">20m</span>
<span class="t" style="left:384.50px;top:142.25px">55</span>
<span class="t" style="left:406.50px;top:142.25px">59</span>
<span class="t" style="left:427.50px;top:142.25px">1</span>
<span class="t" style="left:447.20px;top:142.25px">0</span>
<span class="t" style="left:22.00px;top:157.75px">25.10.1989</span>
<span class="t" style="left:77.00px;top:157.75px">22:31</span>
<span class="t" style="left:116.90px;top:157.75px">N1DLF</span>
<span class="t" style="left:185.30px;top:157.75px">Pete</span>
<span class="t" style="left:233.80px;top:157.75px">VT</span>
<span class="t" style="left:314.50px;top:157.75px">CW</span>
<span class="t" style="left:347.10px;top:157.75px">20m</span>
<span class="t" style="left:384.50px;top:157.75px">539</span>
<span class="t" style="left:406.50px;top:157.75px">579</span>
<span class="t" style="left:427.50px;top:157.75px">1</span>
<span class="t" style="left:447.20px;top:157.75px">1</span>
<span class="t" style="left:22.00px;top:173.25px">25.10.1989</span>
<span class="t" style="left:77.00px;top:173.25px">22:54</span>
<span class="t" style="left:116.90px;top:173.25px">W3BVC</span>
<span class="t" style="left:185.30px;top:173.25px">Alex</span>
<span class="t" style="left:233.80px;top:173.25px">Nr Boston,MA</span>
<span class="t" style="left:314.50px;top:173.25px">CW</span>
<span class="t" style="left:347.10px;top:173.25px">20m</span>
<span class="t" style="left:384.50px;top:173.25px">519</span>
<span class="t" style="left:406.50px;top:173.25px">589</span>
<span class="t" style="left:427.50px;top:173.25px">1</span>
<span class="t" style="left:447.20px;top:173.25px">0</span>
<span class="t" style="left:22.00px;top:188.75px">25.10.1989</span>
<span class="t" style="left:77.00px;top:188.75px">13:15</span>
<span class="t" style="left:116.90px;top:188.75px">EA3AHF</span>
<span class="t" style="left:185.30px;top:188.75px">Ismael</span>
<span class="t" style="left:233.80px;top:188.75px">St Feliu</span>
<span class="t" style="left:314.50px;top:188.75px">FM</span>
<span class="t" style="left:347.10px;top:188.75px">2m</span>
<span class="t" style="left:384.50px;top:188.75px">59</span>
<span class="t" style="left:406.50px;top:188.75px">59</span>
<span class="t" style="left:427.50px;top:188.75px">1</span>
<span class="t" style="left:447.20px;top:188.75px">1</span>
<span class="t" style="left:22.00px;top:204.25px">25.10.1989</span>
<span class="t" style="left:77.00px;top:204.25px">13:45</span>
<span class="t" style="left:116.90px;top:204.25px">FE5XI</span>
<span class="t" style="left:185.30px;top:204.25px">Andre</span>
<span class="t" style="left:233.80px;top:204.25px">Draguignan</span>
<span class="t" style="left:314.50px;top:204.25px">SSB</span>
<span class="t" style="left:347.10px;top:204.25px">20m</span>
<span class="t" style="left:384.50px;top:204.25px">59</span>
<span class="t" style="left:406.50px;top:204.25px">59</span>
<span class="t" style="left:427.50px;top:204.25px">1</span>
<span class="t" style="left:447.20px;top:204.25px">1</span>
<span class="t" style="left:22.00px;top:219.75px">25.10.1989</span>
<span class="t" style="left:77.00px;top:219.75px">14:20</span>
<span class="t" style="left:116.90px;top:219.75px">DL6DC</span>
<span class="t" style="left:185.30px;top:219.75px">Christia</span>
<span class="t" style="left:233.80px;top:219.75px">Witten</span>
<span class="t" style="left:314.50px;top:219.75px">SSB</span>
<span class="t" style="left:347.10px;top:219.75px">20m</span>
<span class="t" style="left:384.50px;top:219.75px">57</span>
<span class="t" style="left:406.50px;top:219.75px">59</span>
<span class="t" style="left:427.50px;top:219.75px">1</span>
<span class="t" style="left:447.20px;top:219.75px">1</span>
<span class="t" style="left:22.00px;top:235.25px">25.10.1989</span>
<span class="t" style="left:77.00px;top:235.25px">14:05</span>
<span class="t" style="left:116.90px;top:235.25px">ON4JN</span>
<span class="t" style="left:185.30px;top:235.25px">Jan</span>
<span class="t" style="left:233.80px;top:235.25px">Namur</span>
<span class="t" style="left:314.50px;top:235.25px">SSB</span>
<span class="t" style="left:347.10px;top:235.25px">20m</span>
<span class="t" style="left:384.50px;top:235.25px">59</span>
<span class="t" style="left:406.50px;top:235.25px">59</span>
<span class="t" style="left:427.50px;top:235.25px">1</span>
<span class="t" style="left:447.20px;top:235.25px">1</span>
<span class="t" style="left:22.00px;top:250.75px">25.10.1989</span>
<span class="t" style="left:77.00px;top:250.75px">13:15</span>
<span class="t" style="left:116.90px;top:250.75px">EA3BHE</span>
<span class="t" style="left:185.30px;top:250.75px">Pili</span>
<span class="t" style="left:233.80px;top:250.75px">St Feliu</span>
<span class="t" style="left:314.50px;top:250.75px">FM</span>
<span class="t" style="left:347.10px;top:250.75px">2m</span>
<span class="t" style="left:384.50px;top:250.75px">59</span>
<span class="t" style="left:406.50px;top:250.75px">59</span>
<span class="t" style="left:427.50px;top:250.75px">1</span>
<span class="t" style="left:447.20px;top:250.75px">1</span>
<span class="t" style="left:22.00px;top:266.25px">25.10.1989</span>
<span class="t" style="left:77.00px;top:266.25px">14:15</span>
<span class="t" style="left:116.90px;top:266.25px">EB3CXT</span>
<span class="t" style="left:185.30px;top:266.25px">Ramón</span>
<span class="t" style="left:233.80px;top:266.25px">St Feliu</span>
<span class="t" style="left:314.50px;top:266.25px">FM</span>
<span class="t" style="left:347.10px;top:266.25px">2m</span>
<span class="t" style="left:384.50px;top:266.25px">59</span>
<span class="t" style="left:406.50px;top:266.25px">59</span>
<span class="t" style="left:427.50px;top:266.25px">1</span>
<span class="t" style="left:447.20px;top:266.25px">1</span>
<span class="t" style="left:22.00px;top:281.75px">25.10.1989</span>
<span class="t" style="left:77.00px;top:281.75px">14:25</span>
<span class="t" style="left:116.90px;top:281.75px">DL0WI</span>
<span class="t" style="left:185.30px;top:281.75px">Christia</span>
<span class="t" style="left:233.80px;top:281.75px">Witten</span>
<span class="t" style="left:314.50px;top:281.75px">SSB</span>
<span class="t" style="left:347.10px;top:281.75px">20m</span>
<span class="t" style="left:384.50px;top:281.75px">57</span>
<span class="t" style="left:406.50px;top:281.75px">59</span>
<span class="t" style="left:427.50px;top:281.75px">1</span>
<span class="t" style="left:447.20px;top:281.75px">1</span>
<span class="t" style="left:22.00px;top:297.25px">26.10.1989</span>
<span class="t" style="left:77.00px;top:297.25px">23:28</span>
<span class="t" style="left:116.90px;top:297.25px">KD2JC</span>
<span class="t" style="left:185.30px;top:297.25px">Joe</span>
<span class="t" style="left:233.80px;top:297.25px">Howell,NJ</span>
<span class="t" style="left:314.50px;top:297.25px">RTTY</span>
<span class="t" style="left:347.10px;top:297.25px">20m</span>
<span class="t" style="left:384.50px;top:297.25px">519</span>
<span class="t" style="left:406.50px;top:297.25px">579</span>
<span class="t" style="left:427.50px;top:297.25px">1</span>
<span class="t" style="left:447.20px;top:297.25px">0</span>
<span class="t" style="left:22.00px;top:312.75px">26.10.1989</span>
<span class="t" style="left:77.00px;top:312.75px">14:30</span>
<span class="t" style="left:116.90px;top:312.75px">DL5DBO</span>
<span class="t" style="left:185.30px;top:312.75px">Arnold</span>
<span class="t" style="left:233.80px;top:312.75px">Dortmund</span>
<span class="t" style="left:314.50px;top:312.75px">CW</span>
<span class="t" style="left:347.10px;top:312.75px">20m</span>
<span class="t" style="left:384.50px;top:312.75px">579</span>
<span class="t" style="left:406.50px;top:312.75px">599</span>
<span class="t" style="left:427.50px;top:312.75px">1</span>
<span class="t" style="left:447.20px;top:312.75px">0</span>
<span class="t" style="left:22.00px;top:328.25px">26.10.1989</span>
<span class="t" style="left:77.00px;top:328.25px">14:15</span>
<span class="t" style="left:116.90px;top:328.25px">LZ1KCP</span>
<span class="t" style="left:185.30px;top:328.25px">Peyo</span>
<span class="t" style="left:233.80px;top:328.25px">Karlovo</span>
<span class="t" style="left:314.50px;top:328.25px">SSB</span>
<span class="t" style="left:347.10px;top:328.25px">10m</span>
<span class="t" style="left:384.50px;top:328.25px">51</span>
<span class="t" style="left:406.50px;top:328.25px">59</span>
<span class="t" style="left:427.50px;top:328.25px">1</span>
<span class="t" style="left:447.20px;top:328.25px">0</span>
<span class="t" style="left:22.00px;top:343.75px">26.10.1989</span>
<span class="t" style="left:77.00px;top:343.75px">14:20</span>
<span class="t" style="left:116.90px;top:343.75px">I6BDS</span>
<span class="t" style="left:185.30px;top:343.75px">Luciano</span>
<span class="t" style="left:233.80px;top:343.75px">Ancona</span>
<span class="t" style="left:314.50px;top:343.75px">SSB</span>
<span class="t" style="left:347.10px;top:343.75px">20m</span>
<span class="t" style="left:384.50px;top:343.75px">59</span>
<span class="t" style="left:406.50px;top:343.75px">57</span>
<span class="t" style="left:427.50px;top:343.75px">1</span>
<span class="t" style="left:447.20px;top:343.75px">0</span>
<span class="t" style="left:22.00px;top:359.25px">26.10.1989</span>
<span class="t" style="left:77.00px;top:359.25px">19:19</span>
<span class="t" style="left:116.90px;top:359.25px">EA3CEW</span>
<span class="t" style="left:185.30px;top:359.25px">Joaquin</span>
<span class="t" style="left:233.80px;top:359.25px">St Boi</span>
<span class="t" style="left:314.50px;top:359.25px">FM</span>
<span class="t" style="left:347.10px;top:359.25px">2m</span>
<span class="t" style="left:384.50px;top:359.25px">59</span>
<span class="t" style="left:406.50px;top:359.25px">59</span>
<span class="t" style="left:427.50px;top:359.25px">1</span>
<span class="t" style="left:447.20px;top:359.25px">0</span>
<span class="t" style="left:22.00px;top:374.75px">26.10.1989</span>
<span class="t" style="left:77.00px;top:374.75px">13:13</span>
<span class="t" style="left:116.90px;top:374.75px">SV2AOB</span>
<span class="t" style="left:185.30px;top:374.75px">Bill</span>
<span class="t" style="left:314.50px;top:374.75px">SSB</span>
<span class="t" style="left:347.10px;top:374.75px">10m</span>
<span class="t" style="left:384.50px;top:374.75px">51</span>
<span class="t" style="left:406.50px;top:374.75px">59</span>
<span class="t" style="left:427.50px;top:374.75px">1</span>
<span class="t" style="left:447.20px;top:374.75px">1</span>
<span class="t" style="left:22.00px;top:390.25px">26.10.1989</span>
<span class="t" style="left:77.00px;top:390.25px">18:40</span>
<span class="t" style="left:116.90px;top:390.25px">EA3CUI</span>
<span class="t" style="left:185.30px;top:390.25px">Jordi</span>
<span class="t" style="left:233.80px;top:390.25px">St Boi</span>
<span class="t" style="left:314.50px;top:390.25px">FM</span>
<span class="t" style="left:347.10px;top:390.25px">2m</span>
<span class="t" style="left:384.50px;top:390.25px">59</span>
<span class="t" style="left:406.50px;top:390.25px">59</span>
<span class="t" style="left:427.50px;top:390.25px">1</span>
<span class="t" style="left:447.20px;top:390.25px">0</span>
<span class="t" style="left:22.00px;top:405.75px">26.10.1989</span>
<span class="t" style="left:77.00px;top:405.75px">13:03</span>
<span class="t" style="left:116.90px;top:405.75px">UV3DEE</span>
<span class="t" style="left:185.30px;top:405.75px">Anatol</span>
<span class="t" style="left:233.80px;top:405.75px">Pushkino</span>
<span class="t" style="left:314.50px;top:405.75px">SSB</span>
<span class="t" style="left:347.10px;top:405.75px">10m</span>
<span class="t" style="left:384.50px;top:405.75px">51</span>
<span class="t" style="left:406.50px;top:405.75px">59</span>
<span class="t" style="left:427.50px;top:405.75px">1</span>
<span class="t" style="left:447.20px;top:405.75px">0</span>
<span class="t" style="left:22.00px;top:421.25px">26.10.1989</span>
<span class="t" style="left:77.00px;top:421.25px">13:29</span>
<span class="t" style="left:116.90px;top:421.25px">KB2BBT</span>
<span class="t" style="left:314.50px;top:421.25px">SSB</span>
<span class="t" style="left:347.10px;top:421.25px">10m</span>
<span class="t" style="left:384.50px;top:421.25px">51</span>
<span class="t" style="left:406.50px;top:421.25px">55</span>
<span class="t" style="left:427.50px;top:421.25px">1</span>
<span class="t" style="left:447.20px;top:421.25px">0</span>
<span class="t" style="left:22.00px;top:436.75px">26.10.1989</span>
<span class="t" style="left:77.00px;top:436.75px">23:11</span>
<span class="t" style="left:116.90px;top:436.75px">IK3ITQ</span>
<span class="t" style="left:185.30px;top:436.75px">Ferruccio</span>
<span class="t" style="left:233.80px;top:436.75px">Verona</span>
<span class="t" style="left:314.50px;top:436.75px">RTTY</span>
<span class="t" style="left:347.10px;top:436.75px">20m</span>
<span class="t" style="left:384.50px;top:436.75px">519</span>
<span class="t" style="left:406.50px;top:436.75px">569</span>
<span class="t" style="left:427.50px;top:436.75px">1</span>
<span class="t" style="left:447.20px;top:436.75px">1</span>
<span class="t" style="left:22.00px;top:452.25px">26.10.1989</span>
<span class="t" style="left:77.00px;top:452.25px">13:17</span>
<span class="t" style="left:116.90px;top:452.25px">N2JFZ</span>
<span class="t" style="left:314.50px;top:452.25px">SSB</span>
<span class="t" style="left:347.10px;top:452.25px">10m</span>
<span class="t" style="left:384.50px;top:452.25px">51</span>
<span class="t" style="left:406.50px;top:452.25px">53</span>
<span class="t" style="left:427.50px;top:452.25px">1</span>
<span class="t" style="left:447.20px;top:452.25px">0</span>
<span class="t" style="left:22.00px;top:467.75px">26.10.1989</span>
<span class="t" style="left:77.00px;top:467.75px">19:30</span>
<span class="t" style="left:116.90px;top:467.75px">EA3GCT</span>
<span class="t" style="left:185.30px;top:467.75px">Tony</span>
<span class="t" style="left:233.80px;top:467.75px">St Feliu</span>
<span class="t" style="left:314.50px;top:467.75px">FM</span>
<span class="t" style="left:347.10px;top:467.75px">2m</span>
<span class="t" style="left:384.50px;top:467.75px">59</span>
<span class="t" style="left:406.50px;top:467.75px">59</span>
<span class="t" style="left:427.50px;top:467.75px">1</span>
<span class="t" style="left:447.20px;top:467.75px">1</span>
<span class="t" style="left:22.00px;top:483.25px">28.10.1989</span>
<span class="t" style="left:77.00px;top:483.25px">16:40</span>
<span class="t" style="left:116.90px;top:483.25px">EA8BOE</span>
<span class="t" style="left:314.50px;top:483.25px">SSB</span>
<span class="t" style="left:347.10px;top:483.25px">10m</span>
<span class="t" style="left:384.50px;top:483.25px">59</span>
<span class="t" style="left:406.50px;top:483.25px">59</span>
<span class="t" style="left:427.50px;top:483.25px">1</span>
<span class="t" style="left:447.20px;top:483.25px">1</span>
<span class="t" style="left:22.00px;top:498.75px">28.10.1989</span>
<span class="t" style="left:77.00px;top:498.75px">18:06</span>
<span class="t" style="left:116.90px;top:498.75px">K0EJ/4</span>
<span class="t" style="left:314.50px;top:498.75px">SSB</span>
<span class="t" style="left:347.10px;top:498.75px">10m</span>
<span class="t" style="left:384.50px;top:498.75px">59</span>
<span class="t" style="left:406.50px;top:498.75px">59</span>
<span class="t" style="left:427.50px;top:498.75px">1</span>
<span class="t" style="left:447.20px;top:498.75px">0</span>
<span class="t" style="left:22.00px;top:514.25px">28.10.1989</span>
<span class="t" style="left:77.00px;top:514.25px">16:01</span>
<span class="t" style="left:116.90px;top:514.25px">K1EU</span>
<span class="t" style="left:314.50px;top:514.25px">SSB</span>
<span class="t" style="left:347.10px;top:514.25px">10m</span>
<span class="t" style="left:384.50px;top:514.25px">59</span>
<span class="t" style="left:406.50px;top:514.25px">59</span>
<span class="t" style="left:427.50px;top:514.25px">1</span>
<span class="t" style="left:447.20px;top:514.25px">0</span>
<span class="t" style="left:22.00px;top:529.75px">28.10.1989</span>
<span class="t" style="left:77.00px;top:529.75px">16:48</span>
<span class="t" style="left:116.90px;top:529.75px">K1NG</span>
<span class="t" style="left:314.50px;top:529.75px">SSB</span>
<span class="t" style="left:347.10px;top:529.75px">10m</span>
<span class="t" style="left:384.50px;top:529.75px">59</span>
<span class="t" style="left:406.50px;top:529.75px">59</span>
<span class="t" style="left:427.50px;top:529.75px">1</span>
<span class="t" style="left:447.20px;top:529.75px">0</span>
<span class="t" style="left:22.00px;top:545.25px">28.10.1989</span>
<span class="t" style="left:77.00px;top:545.25px">17:17</span>
<span class="t" style="left:116.90px;top:545.25px">K1RV</span>
<span class="t" style="left:314.50px;top:545.25px">SSB</span>
<span class="t" style="left:347.10px;top:545.25px">10m</span>
<span class="t" style="left:384.50px;top:545.25px">59</span>
<span class="t" style="left:406.50px;top:545.25px">59</span>
<span class="t" style="left:427.50px;top:545.25px">1</span>
<span class="t" style="left:447.20px;top:545.25px">0</span>
<span class="t" style="left:22.00px;top:560.75px">28.10.1989</span>
<span class="t" style="left:77.00px;top:560.75px">16:58</span>
<span class="t" style="left:116.90px;top:560.75px">K1ZM</span>
<span class="t" style="left:314.50px;top:560.75px">SSB</span>
<span class="t" style="left:347.10px;top:560.75px">10m</span>
<span class="t" style="left:384.50px;top:560.75px">59</span>
<span class="t" style="left:406.50px;top:560.75px">59</span>
<span class="t" style="left:427.50px;top:560.75px">1</span>
<span class="t" style="left:447.20px;top:560.75px">0</span>
<span class="t" style="left:22.00px;top:576.25px">28.10.1989</span>
<span class="t" style="left:77.00px;top:576.25px">18:35</span>
<span class="t" style="left:116.90px;top:576.25px">K2ZJ</span>
<span class="t" style="left:314.50px;top:576.25px">SSB</span>
<span class="t" style="left:347.10px;top:576.25px">10m</span>
<span class="t" style="left:384.50px;top:576.25px">59</span>
<span class="t" style="left:406.50px;top:576.25px">59</span>
<span class="t" style="left:427.50px;top:576.25px">1</span>
<span class="t" style="left:447.20px;top:576.25px">0</span>
<span class="t" style="left:22.00px;top:591.75px">28.10.1989</span>
<span class="t" style="left:77.00px;top:591.75px">14:42</span>
<span class="t" style="left:116.90px;top:591.75px">K3VW</span>
<span class="t" style="left:185.30px;top:591.75px">Pete</span>
<span class="t" style="left:233.80px;top:591.75px">Phil,PA</span>
<span class="t" style="left:314.50px;top:591.75px">SSB</span>
<span class="t" style="left:347.10px;top:591.75px">10m</span>
<span class="t" style="left:384.50px;top:591.75px">59</span>
<span class="t" style="left:406.50px;top:591.75px">59</span>
<span class="t" style="left:427.50px;top:591.75px">1</span>
<span class="t" style="left:447.20px;top:591.75px">0</span>
<span class="t" style="left:22.00px;top:607.25px">28.10.1989</span>
<span class="t" style="left:77.00px;top:607.25px">16:01</span>
<span class="t" style="left:116.90px;top:607.25px">K4ISV</span>
<span class="t" style="left:314.50px;top:607.25px">SSB</span>
<span class="t" style="left:347.10px;top:607.25px">10m</span>
<span class="t" style="left:384.50px;top:607.25px">59</span>
<span class="t" style="left:406.50px;top:607.25px">59</span>
<span class="t" style="left:427.50px;top:607.25px">1</span>
<span class="t" style="left:447.20px;top:607.25px">0</span>
    </div>
   </div>
  </div>
  <i style="left:238px;top:782px;width:585px;height:1px;background:#ACA899"></i>
  <!-- vertical scrollbar (classic) x 811..827 -> client 806 -->
  <div class="abs chk" style="left:806px;top:116px;width:17px;height:648px"></div>
  <i style="left:806px;top:765px;width:17px;height:18px;background:#ECE9D8;border-top:1px solid #fff;border-left:1px solid #fff"></i>
  <i style="left:806px;top:116px;width:17px;height:19px;background:#ECE9D8;border:1px solid;border-color:#fff #716F64 #716F64 #fff;box-shadow:inset -1px -1px 0 #ACA899"></i>
  <i style="left:810px;top:122px;width:0;height:0;border-bottom:5px solid #000;border-left:4.500px solid transparent;border-right:4.500px solid transparent"></i>
  <i style="left:806px;top:135px;width:17px;height:21px;background:#ECE9D8;border:1px solid;border-color:#fff #716F64 #716F64 #fff;box-shadow:inset -1px -1px 0 #ACA899"></i>
  <i style="left:806px;top:745px;width:17px;height:19px;background:#ECE9D8;border:1px solid;border-color:#fff #716F64 #716F64 #fff;box-shadow:inset -1px -1px 0 #ACA899"></i>
  <i style="left:810px;top:752px;width:0;height:0;border-top:5px solid #000;border-left:4.500px solid transparent;border-right:4.500px solid transparent"></i>
  <!-- horizontal scrollbar -->
  <div class="abs chk" style="left:675px;top:765px;width:131px;height:17px"></div>
  <i style="left:675px;top:765px;width:20px;height:17px;background:#ECE9D8;border:1px solid;border-color:#fff #716F64 #716F64 #fff;box-shadow:inset -1px -1px 0 #ACA899"></i>
  <i style="left:681px;top:769px;width:0;height:0;border-right:5px solid #000;border-top:4.500px solid transparent;border-bottom:4.500px solid transparent"></i>
  <i style="left:695px;top:765px;width:21px;height:17px;background:#ECE9D8;border:1px solid;border-color:#fff #716F64 #716F64 #fff;box-shadow:inset -1px -1px 0 #ACA899"></i>
  <i style="left:786px;top:765px;width:20px;height:17px;background:#ECE9D8;border:1px solid;border-color:#fff #716F64 #716F64 #fff;box-shadow:inset -1px -1px 0 #ACA899"></i>
  <i style="left:794px;top:769px;width:0;height:0;border-left:5px solid #000;border-top:4.500px solid transparent;border-bottom:4.500px solid transparent"></i>
 </div>
</div>
</body></html>
